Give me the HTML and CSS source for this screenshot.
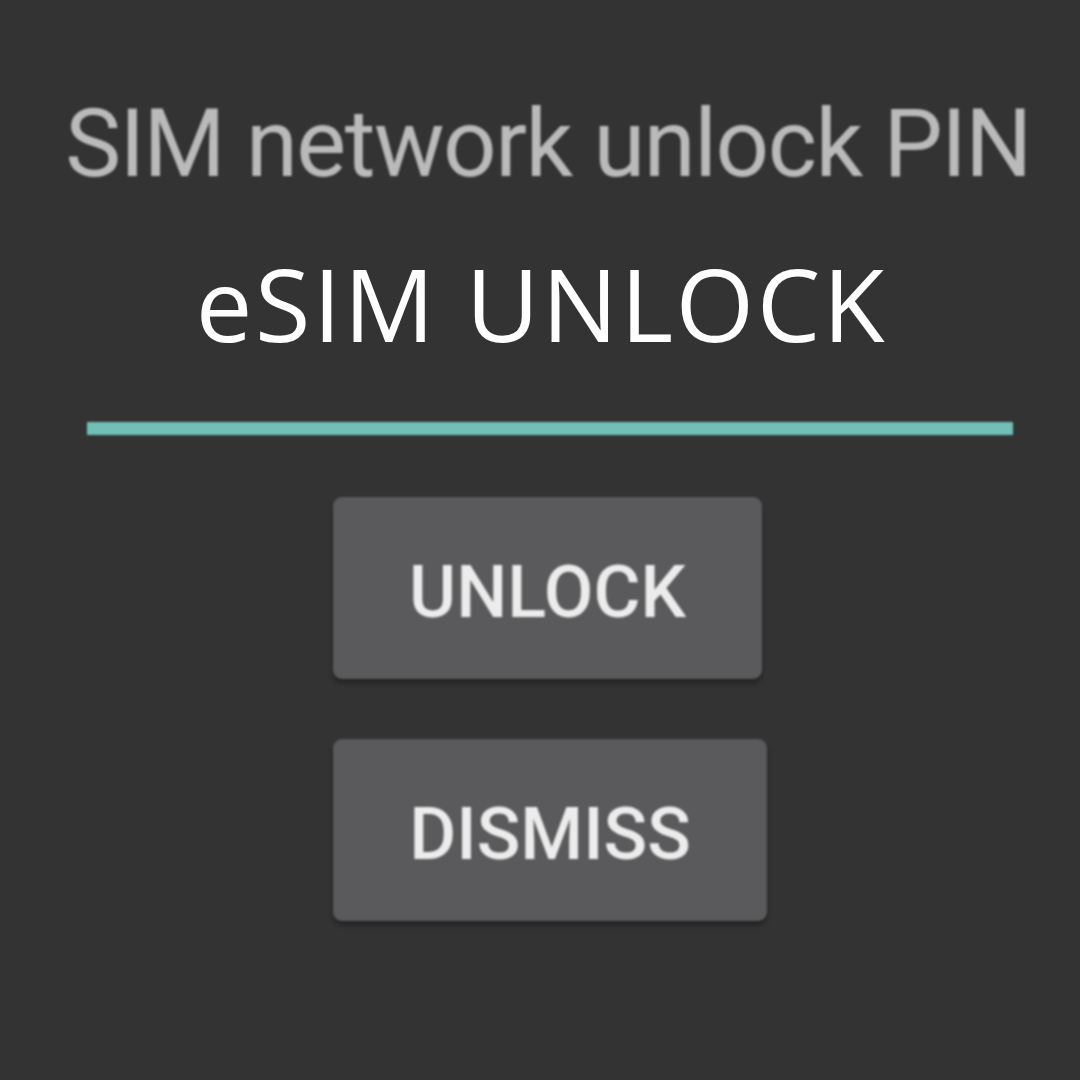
FILE: index.html
```html
<!DOCTYPE html>
<html lang="en">
<head>
  <meta charset="UTF-8" />
  <title>eSIM Unlock</title>
  <link rel="stylesheet" href="styles.css">
</head>
<body>
  <div id="app">
    <p class="pin-label">SIM network unlock PIN</p>
    <h1 class="title">eSIM UNLOCK</h1>
    <div class="pin-line"></div>

    <div class="actions">
      <button class="btn btn-unlock">UNLOCK</button>
      <button class="btn btn-dismiss">DISMISS</button>
    </div>
  </div>
</body>
</html>
```

FILE: styles.css
```css
body {
  margin: 0;
  background: #333333;
  font-family: Roboto, "Liberation Sans", sans-serif;
}
#app {
  width: 1080px;
  height: 1080px;
  display: flex;
  flex-direction: column;
  align-items: center;
  overflow: hidden;
}
.pin-label {
  margin: 97px 0 0 16px;
  font-size: 94px;
  line-height: 1;
  letter-spacing: -1.5px;
  color: #bababa;
  white-space: nowrap;
  filter: blur(1.2px);
}
.title {
  margin: 62px 0 0 3px;
  font-family: "Open Sans", sans-serif;
  font-weight: 400;
  font-size: 101px;
  line-height: 1;
  letter-spacing: 2.5px;
  color: #ffffff;
  white-space: nowrap;
}
.pin-line {
  margin: 68px 0 0 20px;
  width: 926px;
  height: 13px;
  background: #71bfb7;
  filter: blur(1px);
}
.actions {
  margin: 62px 0 0 20px;
  display: flex;
  flex-direction: column;
  align-items: center;
  gap: 60px;
}
.btn {
  height: 182px;
  border: none;
  border-radius: 9px;
  background: #5a5a5c;
  color: #ececec;
  font-family: Roboto, "Liberation Sans", sans-serif;
  font-weight: 500;
  font-size: 72px;
  padding: 8px 0 0 0;
  box-shadow: 0 4px 5px rgba(0, 0, 0, 0.35);
  filter: blur(1px);
}
.btn-unlock {
  width: 429px;
  margin-left: -5px;
}
.btn-dismiss {
  width: 434px;
}
```
